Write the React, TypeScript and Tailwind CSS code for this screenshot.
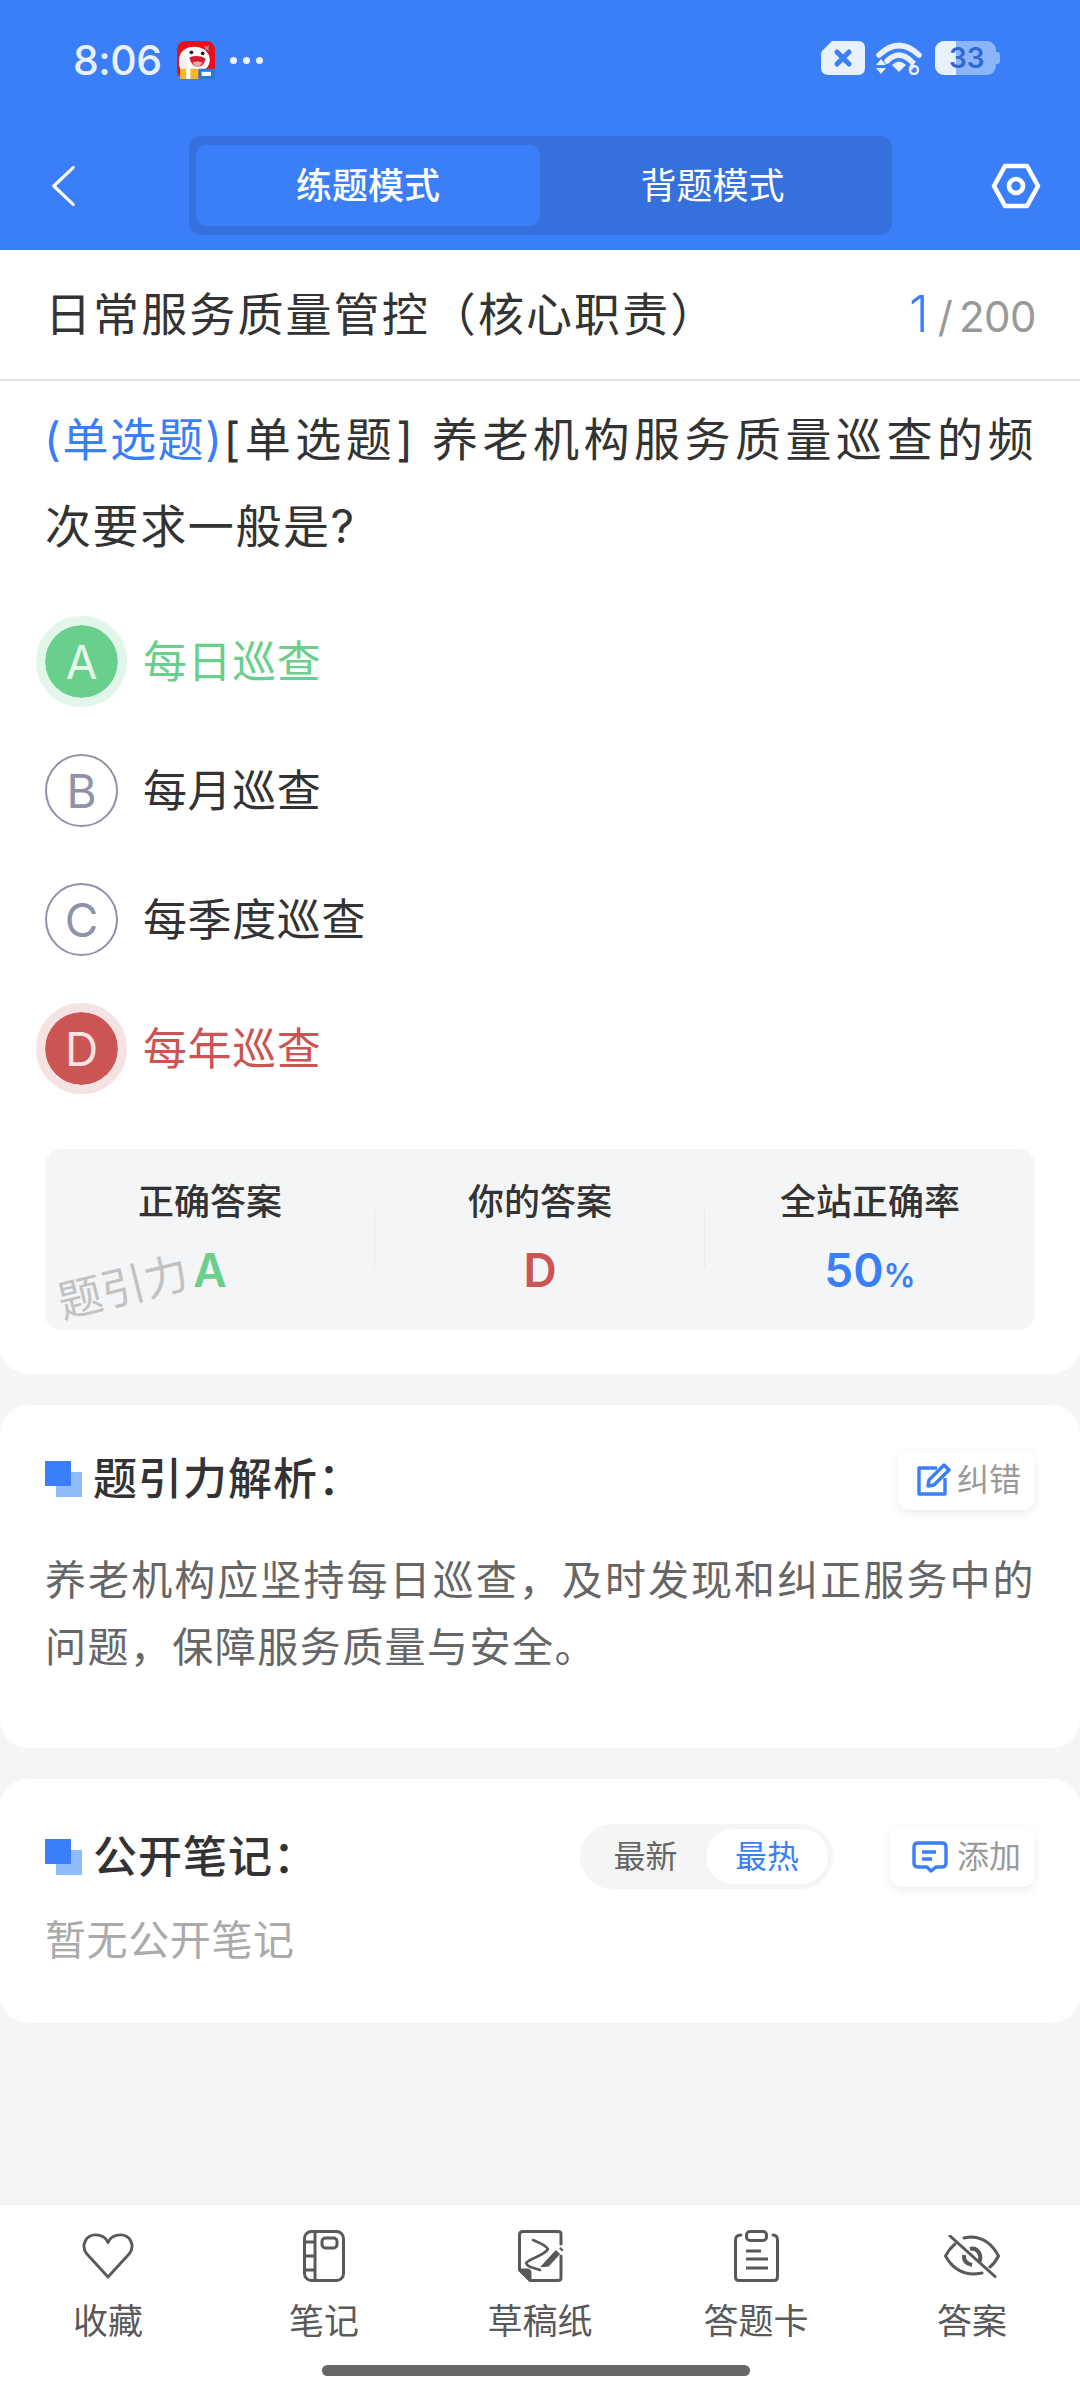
import React from "react";

function AppIcon() {
  return (
    <svg width="38" height="38" viewBox="0 0 37 37">
      <rect width="37" height="37" rx="8" fill="#e8101c" />
      <path d="M2 19 C2 8 12 4 21 6 C30 8 34 16 31 23 C29 28 24 29 18 29 L4 29 Z" fill="#fff" />
      <path d="M27 5 L31 9 M31 5 L27 9" stroke="#8a97b8" strokeWidth="1.6" />
      <ellipse cx="6" cy="22" rx="4" ry="7" fill="#f3f3f3" />
      <circle cx="14" cy="11" r="1.8" fill="#222" />
      <circle cx="25" cy="12" r="1.8" fill="#222" />
      <path d="M12 16 Q20 13 28 17 Q26 26 19 25 Q14 24 12 16Z" fill="#cf2230" />
      <path d="M15 21 Q20 19 25 21 Q22 26 18 25Z" fill="#f7a3a3" />
      <rect x="3" y="27" width="18" height="10" fill="#f8b62a" />
      <rect x="9" y="27" width="4" height="10" fill="#fff" />
      <rect x="21" y="27" width="16" height="10" fill="#2a79d8" />
      <rect x="24" y="30" width="9" height="4" fill="#fff" />
    </svg>
  );
}

function XBox() {
  return (
    <svg width="44" height="34" viewBox="0 0 44 34">
      <path d="M11 0 H37 Q44 0 44 7 V27 Q44 34 37 34 H8 Q0 34 0 27 V13 Q0 10 3 8 Z" fill="#e9f0fe" />
      <path d="M16 11 L28 23 M28 11 L16 23" stroke="#3b7ff8" strokeWidth="5" strokeLinecap="round" />
    </svg>
  );
}

function Wifi() {
  return (
    <svg width="46" height="34" viewBox="0 0 46 34">
      <path d="M3 14 Q23 -5 43 14" fill="none" stroke="#e9f0fe" strokeWidth="5.5" strokeLinecap="round" />
      <path d="M11 20 Q23 8 35 20" fill="none" stroke="#e9f0fe" strokeWidth="5.5" strokeLinecap="round" />
      <path d="M16 24 Q23 17 30 24 L23 31 Z" fill="#e9f0fe" />
      <path d="M5 18 L10 24 H0 Z M0 27 H10 L5 33 Z" fill="#e9f0fe" />
      <path d="M39 20 Q34 25 34 29 A4 4 0 1 0 38 25 Q35 26 35 29" fill="none" stroke="#e9f0fe" strokeWidth="2.5" />
    </svg>
  );
}

function Battery() {
  return (
    <div className="relative flex h-[34px] w-[65px] items-center">
      <div className="h-[34px] w-[61px] overflow-hidden rounded-[9px] bg-[#8db5fb]">
        <div className="h-full w-[21px] bg-[#e9f0fe]" />
      </div>
      <div className="h-[12px] w-[4px] rounded-r-[3px] bg-[#8db5fb]" />
      <span className="absolute left-[14px] top-0 text-[28px] leading-[34px] font-semibold text-[#2f6ad0]">33</span>
    </div>
  );
}

function SquareMark() {
  return (
    <svg width="37" height="36" viewBox="0 0 37 36" className="shrink-0">
      <rect x="11" y="11" width="26" height="25" fill="#8fbcfb" />
      <rect x="0" y="0" width="26" height="25" fill="#3b7ff8" />
    </svg>
  );
}

const opts = [
  { l: "A", t: "每日巡查", s: "g" },
  { l: "B", t: "每月巡查", s: "n" },
  { l: "C", t: "每季度巡查", s: "n" },
  { l: "D", t: "每年巡查", s: "r" },
];

function Option({ l, t, s }: { l: string; t: string; s: string }) {
  const circle =
    s === "g"
      ? "bg-[#69cf8d] text-[#e5f7ec] border-[9px] border-[#e2f6ea] bg-clip-padding w-[91px] h-[91px]"
      : s === "r"
        ? "bg-[#cb5552] text-[#f7e3e3] border-[9px] border-[#f5e2e2] bg-clip-padding w-[91px] h-[91px]"
        : "border-2 border-[#8f92a8] text-[#8f92a8] w-[73px] h-[73px]";
  const color = s === "g" ? "text-[#69cf8d]" : s === "r" ? "text-[#cb5552]" : "text-[#333333]";
  return (
    <div className="flex h-[129px] items-center">
      <div className="flex w-[143px] justify-start pl-[36px]">
        <div className={`flex items-center justify-center rounded-full text-[46px] leading-none ${circle} ${s === "n" ? "ml-[9px]" : ""}`}>{l}</div>
      </div>
      <span className={`text-[44px] tracking-[0.6px] ${color}`}>{t}</span>
    </div>
  );
}

function Stat({ label, children, line }: { label: string; children: React.ReactNode; line?: boolean }) {
  return (
    <div className="relative flex flex-col items-center pt-[29px]">
      <div className="text-[36px] leading-[48px] font-medium text-[#333333]">{label}</div>
      <div className="mt-[20px] h-[48px] text-[46px] leading-[48px] font-semibold">{children}</div>
      {line && <div className="absolute right-0 top-[60px] h-[59px] w-px bg-[#e9eaec]" />}
    </div>
  );
}

const NavIcons = {
  heart: (
    <svg width="54" height="46" viewBox="0 0 56 48" fill="none" stroke="#595959" strokeWidth="3" strokeLinejoin="round">
      <path d="M28 46 L6 22 C-1 13 5 2 15 2 C21 2 26 5 28 10 C30 5 35 2 41 2 C51 2 57 13 50 22 Z" />
    </svg>
  ),
  note: (
    <svg width="42" height="52" viewBox="0 0 42 52" fill="none" stroke="#595959" strokeWidth="3">
      <rect x="1.5" y="1.5" width="39" height="49" rx="7" />
      <path d="M12 2 V50 M2 12 H12 M2 26 H12 M2 40 H12" />
      <rect x="19" y="8" width="15" height="10" rx="3.5" />
    </svg>
  ),
  draft: (
    <svg width="45" height="52" viewBox="0 0 45 52" fill="none" stroke="#595959" strokeWidth="3" strokeLinecap="round" strokeLinejoin="round">
      <path d="M43 14 V4 Q43 1.5 40 1.5 H5 Q1.5 1.5 1.5 5 V40 L12 50.5 H40 Q43 50.5 43 48 V26" />
      <path d="M2 40 H9 Q12 40 12 43 V50 Z" fill="#595959" />
      <path d="M15 10 C22 13 28 15 30 19 C26 26 12 28 8 33 C9 37 16 38 22 40" strokeWidth="2.6" />
      <path d="M28 35 L40 22" strokeWidth="6" strokeLinecap="butt" />
      <path d="M42.5 20 L44 18.5" strokeWidth="4" strokeLinecap="butt" />
      <path d="M23.5 36.5 L26.5 33.5 L29 36 Z" fill="#595959" strokeWidth="1.5" />
    </svg>
  ),
  card: (
    <svg width="45" height="52" viewBox="0 0 45 52" fill="none" stroke="#595959" strokeWidth="3" strokeLinecap="round">
      <path d="M7 5 Q1.5 5 1.5 10 V47 Q1.5 50.5 5 50.5 H40 Q43.5 50.5 43.5 47 V10 Q43.5 5 39 5" />
      <rect x="12.5" y="1.5" width="20" height="9" rx="3.5" />
      <path d="M12 21 H27 M12 29 H34 M12 38 H34" strokeWidth="3.2" strokeLinecap="butt" />
    </svg>
  ),
  eye: (
    <svg width="56" height="43" viewBox="0 0 56 43" fill="none" stroke="#595959" strokeWidth="3" strokeLinecap="round" strokeLinejoin="round">
      <path d="M11 9 Q5 14 1.5 21 Q11 38 28 39 Q33 39 38 38 M20 3 Q24 2 28 2 Q45 3 54.5 21 Q51 28 46 32" />
      <path d="M26 14 Q33 12 36 20 Q37 24 35 27" strokeWidth="4" strokeLinecap="butt" />
      <path d="M20 20 Q19 28 28 30" strokeWidth="4" strokeLinecap="butt" />
      <path d="M6 1 L51 41.5" />
    </svg>
  ),
};

function NavItem({ icon, label }: { icon: React.ReactNode; label: string }) {
  return (
    <div className="flex flex-col items-center">
      <div className="flex h-[56px] items-center justify-center">{icon}</div>
      <div className="mt-[13px] text-[35px] leading-[48px] text-[#595959]">{label}</div>
    </div>
  );
}

export default function App() {
  return (
    <div className="flex h-[2400px] w-[1080px] flex-col overflow-hidden bg-[#f4f5f7] font-['Inter','Noto_Sans_CJK_SC',sans-serif]">
      <header className="h-[250px] shrink-0 bg-[#3b7ff8]">
        <div className="flex h-[136px] items-start justify-between pl-[73px] pr-[80px] pt-[41px]">
          <div className="flex h-[38px] items-center">
            <span className="text-[41px] leading-none font-medium tracking-[-0.5px] text-[#e9f0fe]">8:06</span>
            <div className="ml-[15px] flex"><AppIcon /></div>
            <div className="ml-[15px] flex gap-[6px]">
              <i className="h-[7px] w-[7px] rounded-full bg-[#e9f0fe]" />
              <i className="h-[7px] w-[7px] rounded-full bg-[#e9f0fe]" />
              <i className="h-[7px] w-[7px] rounded-full bg-[#e9f0fe]" />
            </div>
          </div>
          <div className="flex items-center gap-[11px]">
            <XBox />
            <Wifi />
            <div className="ml-[2px]"><Battery /></div>
          </div>
        </div>
        <div className="flex h-[99px] items-center pl-[51px] pr-[39px]">
          <svg width="24" height="42" viewBox="0 0 26 44" fill="none" stroke="#fff" strokeWidth="3.4" strokeLinecap="round" strokeLinejoin="round">
            <path d="M24 2 L3 22 L24 42" />
          </svg>
          <div className="ml-[114px] flex h-[99px] w-[703px] rounded-[12px] bg-[#3570dc] p-[9px_7px]">
            <div className="flex w-[344px] items-center justify-center rounded-[10px] bg-[#3b7ff8] text-[36px] font-medium text-white">练题模式</div>
            <div className="flex flex-1 items-center justify-center text-[36px] text-white">背题模式</div>
          </div>
          <svg width="50" height="46" viewBox="0 0 50 46" fill="none" stroke="#fff" strokeWidth="4.6" strokeLinejoin="round" className="ml-auto">
            <path d="M14 3 H36 L47 23 L36 43 H14 L3 23 Z" />
            <circle cx="25" cy="23" r="7" />
          </svg>
        </div>
      </header>

      <main className="flex-1">
        <section className="rounded-b-[28px] bg-white pb-[44px]">
          <div className="flex h-[131px] items-center justify-between border-b-2 border-[#e4e4e4] pl-[45px] pr-[44px]">
            <h1 className="text-[46px] font-normal tracking-[2.1px] text-[#333333]">日常服务质量管控（核心职责）</h1>
            <div className="flex items-baseline text-[#999999]">
              <span className="text-[50px] font-light text-[#3b7ff8]">1</span>
              <span className="ml-[9px] text-[42px]">/</span>
              <span className="ml-[6px] text-[42px] tracking-[-0.5px]">200</span>
            </div>
          </div>
          <p className="mx-[45px] mt-[15px] text-justify text-[46px] leading-[87px] tracking-[1.6px] text-[#333333]">
            <span className="-ml-[1px] inline-block text-[#3b7ff8]">(单选题)</span>[单选题] 养老机构服务质量巡查的频次要求一般是?
          </p>
          <div className="mt-[27px]">
            {opts.map((o) => (
              <Option key={o.l} {...o} />
            ))}
          </div>
          <div className="relative mx-[45px] mt-[36px] grid h-[181px] grid-cols-3 overflow-hidden rounded-[16px] bg-[#f4f5f7]">
            <Stat label="正确答案" line><span className="text-[#69cf8d]">A</span></Stat>
            <Stat label="你的答案" line><span className="text-[#cb5552]">D</span></Stat>
            <Stat label="全站正确率">
              <span className="text-[#3b7ff8]">50<span className="text-[32px]">%</span></span>
            </Stat>
            <div className="absolute left-[12px] top-[116px] -rotate-[14deg] text-[44px] leading-none text-[#c2c2c2]">题引力</div>
          </div>
        </section>

        <section className="mt-[31px] h-[343px] rounded-[28px] bg-white px-[45px] pt-[45px]">
          <div className="flex items-start justify-between">
            <div className="flex h-[58px] items-center">
              <SquareMark />
              <h2 className="ml-[11px] text-[44px] font-medium tracking-[1px] text-[#333333]">题引力解析：</h2>
            </div>
            <div className="flex h-[60px] w-[137px] items-center justify-end gap-[6px] rounded-[12px] bg-white pr-[14px] shadow-[0_3px_10px_rgba(0,0,0,0.08)]">
              <svg width="35" height="35" viewBox="0 0 35 35" fill="none" stroke="#3b7ff8" strokeWidth="3.4" strokeLinejoin="round">
                <path d="M21 5 H3 V31 H29 V15" />
                <path d="M13 17 L28 2 L33 7 L18 22 L12 23 Z" />
              </svg>
              <span className="text-[32px] text-[#999999]">纠错</span>
            </div>
          </div>
          <p className="mt-[37px] text-justify text-[41px] leading-[67px] tracking-[1.45px] text-[#666666]">
            养老机构应坚持每日巡查，及时发现和纠正服务中的问题，保障服务质量与安全。
          </p>
        </section>

        <section className="mt-[31px] h-[244px] rounded-[28px] bg-white px-[45px] pt-[45px]">
          <div className="flex items-center justify-between">
            <div className="flex h-[65px] flex-1 items-center">
              <SquareMark />
              <h2 className="ml-[11px] text-[44px] font-medium tracking-[1px] text-[#333333]">公开笔记：</h2>
            </div>
            <div className="flex h-[65px] w-[253px] items-center rounded-full bg-[#f5f5f5] p-[5px]">
              <div className="flex flex-1 items-center justify-center text-[32px] text-[#666666]">最新</div>
              <div className="flex h-[55px] w-[122px] items-center justify-center rounded-full bg-white text-[32px] text-[#3b7ff8]">最热</div>
            </div>
            <div className="ml-[57px] flex h-[60px] w-[145px] items-center justify-end gap-[9px] rounded-[12px] bg-white pr-[14px] shadow-[0_3px_10px_rgba(0,0,0,0.08)]">
              <svg width="36" height="32" viewBox="0 0 36 32" fill="none" stroke="#3b7ff8" strokeWidth="3.4" strokeLinejoin="round">
                <path d="M6 2 H30 Q34 2 34 6 V22 Q34 26 30 26 H24 L19 30 L15 26 H6 Q2 26 2 22 V6 Q2 2 6 2 Z" />
                <path d="M10 11 H24 M10 18 H20" strokeWidth="3.6" />
              </svg>
              <span className="text-[32px] text-[#999999]">添加</span>
            </div>
          </div>
          <p className="mt-[23px] text-[41px] leading-[56px] tracking-[0.6px] text-[#aaaaaa]">暂无公开笔记</p>
        </section>
      </main>

      <footer className="h-[196px] shrink-0 border-t border-[#eeeff1] bg-white pt-[23px]">
        <div className="grid grid-cols-5">
          <NavItem icon={NavIcons.heart} label="收藏" />
          <NavItem icon={NavIcons.note} label="笔记" />
          <NavItem icon={NavIcons.draft} label="草稿纸" />
          <NavItem icon={NavIcons.card} label="答题卡" />
          <NavItem icon={NavIcons.eye} label="答案" />
        </div>
        <div className="ml-[322px] mt-[20px] h-[11px] w-[428px] rounded-full bg-[#666666]" />
      </footer>
    </div>
  );
}
